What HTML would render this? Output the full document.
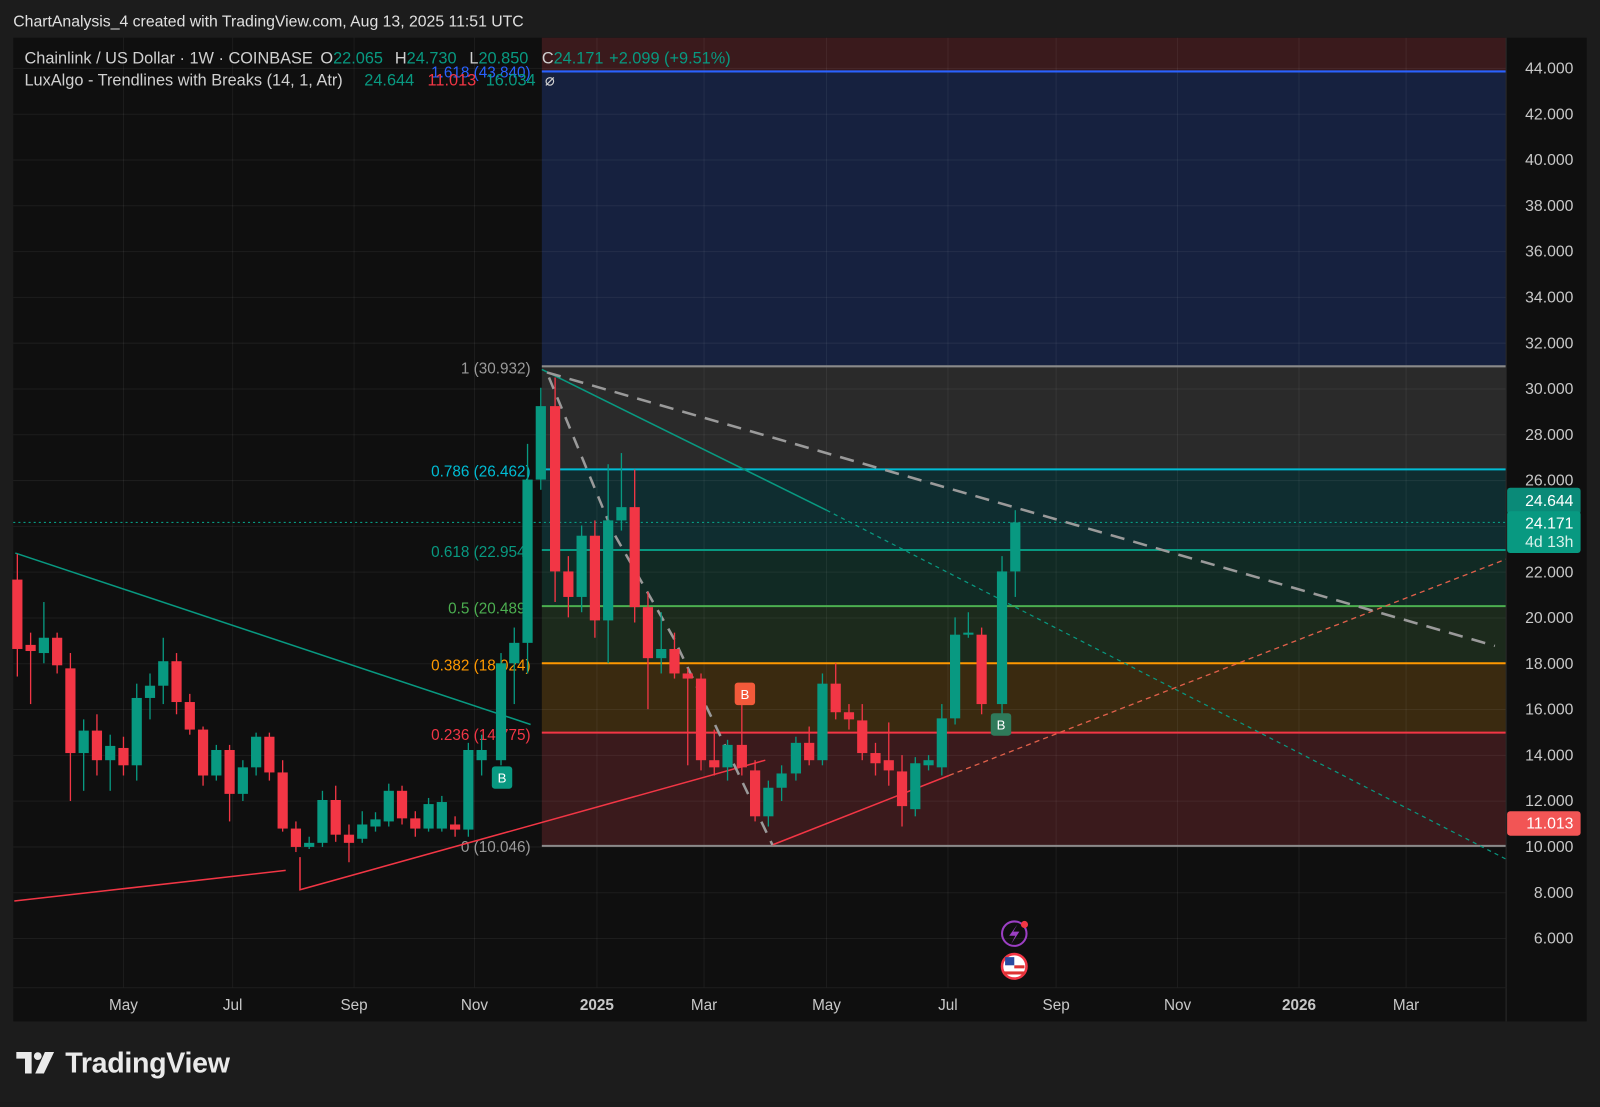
<!DOCTYPE html>
<html><head><meta charset="utf-8"><style>
html,body{margin:0;padding:0;background:#1b1b1b;width:1600px;height:1102px;overflow:hidden}
#w{position:absolute;left:0;top:0;width:1568px;height:1080px;transform:scale(1.0204);transform-origin:0 0;background:#1c1c1c;font-family:"Liberation Sans",sans-serif}
svg text{font-family:"Liberation Sans",sans-serif}
</style></head><body><div id="w">
<svg width="1568" height="1080" xmlns="http://www.w3.org/2000/svg" id="s">
<rect x="0" y="0" width="1568" height="1080" fill="#1c1c1c"/>
<text x="13" y="26" fill="#e0e0e0" font-size="15.5">ChartAnalysis_4 created with TradingView.com, Aug 13, 2025 11:51 UTC</text>
<rect x="13" y="37" width="1542" height="964" fill="#0f0f0f"/>
<rect x="531" y="37" width="945" height="33" fill="#3a1a1c"/>
<rect x="531" y="70" width="945" height="289" fill="#16213f"/>
<rect x="531" y="359" width="945" height="101" fill="#2a2a2a"/>
<rect x="531" y="460" width="945" height="79" fill="#0f2d30"/>
<rect x="531" y="539" width="945" height="55" fill="#112a24"/>
<rect x="531" y="594" width="945" height="56" fill="#1c2a1c"/>
<rect x="531" y="650" width="945" height="68" fill="#3a2a10"/>
<rect x="531" y="718" width="945" height="112" fill="#3a1a1c"/>
<g id="grid" stroke="#ffffff" stroke-opacity="0.06" stroke-width="1"></g>
<g stroke-width="2">
<line x1="531" y1="70" x2="1476" y2="70" stroke="#2962ff"/>
<line x1="531" y1="359" x2="1476" y2="359" stroke="#8a8a8a"/>
<line x1="531" y1="460" x2="1476" y2="460" stroke="#00bcd4"/>
<line x1="531" y1="539" x2="1476" y2="539" stroke="#089981"/>
<line x1="531" y1="594" x2="1476" y2="594" stroke="#4caf50"/>
<line x1="531" y1="650" x2="1476" y2="650" stroke="#ff9800"/>
<line x1="531" y1="718" x2="1476" y2="718" stroke="#f23645"/>
<line x1="531" y1="829" x2="1476" y2="829" stroke="#8a8a8a"/>
</g>
<g font-size="15" text-anchor="end">
<text x="520" y="366" fill="#9a9a9a">1 (30.932)</text>
<text x="520" y="467" fill="#00bcd4">0.786 (26.462)</text>
<text x="520" y="546" fill="#089981">0.618 (22.954)</text>
<text x="520" y="601" fill="#4caf50">0.5 (20.489)</text>
<text x="520" y="657" fill="#ff9800">0.382 (18.024)</text>
<text x="520" y="725" fill="#f23645">0.236 (14.775)</text>
<text x="520" y="835" fill="#9a9a9a">0 (10.046)</text>
<text x="520" y="76" fill="#2962ff">1.618 (43.840)</text>
</g>
<line x1="13" y1="512" x2="1476" y2="512" stroke="#089981" stroke-width="1" stroke-dasharray="2,3"/>
<line x1="15" y1="542" x2="520" y2="710" stroke="#089981" stroke-width="1.5"/>
<polyline points="14,883 280,853" stroke="#f23645" stroke-width="1.5" fill="none"/>
<polyline points="294,840 294,872 750,745" stroke="#f23645" stroke-width="1.5" fill="none"/>
<line x1="757" y1="828" x2="930" y2="760" stroke="#f23645" stroke-width="1.5"/>
<line x1="930" y1="760" x2="1476" y2="548" stroke="#e0604a" stroke-width="1.3" stroke-dasharray="5,4"/>
<line x1="531" y1="362" x2="810" y2="500" stroke="#089981" stroke-width="1.5"/>
<line x1="810" y1="500" x2="1476" y2="842" stroke="#089981" stroke-width="1.2" stroke-dasharray="4,4"/>
<line x1="536" y1="365" x2="1465" y2="633" stroke="#9a9a9a" stroke-width="2.5" stroke-dasharray="14,9"/>
<polyline points="538,370 600,520 660,625 757,828" stroke="#9a9a9a" stroke-width="2.5" fill="none" stroke-dasharray="12,9"/>
<g id="c"></g>
<g font-size="13" text-anchor="middle" fill="#fff">
<rect x="482" y="751" width="20" height="22" rx="3" fill="#089981"/><text x="492" y="767">B</text>
<rect x="720" y="669" width="20" height="22" rx="3" fill="#f25a3a"/><text x="730" y="685">B</text>
<rect x="971" y="699" width="20" height="22" rx="3" fill="#2f7a5a"/><text x="981" y="715">B</text>
</g>
<circle cx="994" cy="915" r="12" fill="none" stroke="#9c3fc4" stroke-width="2"/>
<path d="M997 906 L989 917 L995 917 L991 925 L999 913 L993 913 Z" fill="#9c3fc4"/>
<circle cx="1004" cy="906" r="3.5" fill="#f23645"/>
<circle cx="994" cy="947" r="12" fill="#fff" stroke="#f23645" stroke-width="2.5"/>
<rect x="985" y="938" width="9" height="8" fill="#2a4aa0"/>
<rect x="994" y="946" width="10" height="3" fill="#d33"/><rect x="984" y="952" width="20" height="3" fill="#d33"/>
<line x1="1476" y1="37" x2="1476" y2="1001" stroke="#2a2a2a"/>
<g id="pa" font-size="15.5" fill="#c8c8c8" text-anchor="end"></g>
<rect x="1477" y="478" width="72" height="26" rx="3" fill="#0a8a78"/>
<text x="1542" y="496" fill="#fff" font-size="15.5" text-anchor="end">24.644</text>
<rect x="1477" y="501" width="72" height="41" rx="3" fill="#089981"/>
<text x="1542" y="518" fill="#fff" font-size="15.5" text-anchor="end">24.171</text>
<text x="1542" y="536" fill="#d8f0ea" font-size="15.5" text-anchor="end">4d 13h</text>
<rect x="1477" y="795" width="72" height="24" rx="3" fill="#f25555"/>
<text x="1542" y="812" fill="#fff" font-size="15.5" text-anchor="end">11.013</text>
<line x1="13" y1="968" x2="1476" y2="968" stroke="#1f1f1f"/>
<g font-size="15" fill="#c8c8c8" text-anchor="middle">
<text x="121" y="990">May</text><text x="228" y="990">Jul</text><text x="347" y="990">Sep</text><text x="465" y="990">Nov</text>
<text x="585" y="990" font-weight="bold">2025</text><text x="690" y="990">Mar</text><text x="810" y="990">May</text><text x="929" y="990">Jul</text>
<text x="1035" y="990">Sep</text><text x="1154" y="990">Nov</text><text x="1273" y="990" font-weight="bold">2026</text><text x="1378" y="990">Mar</text>
</g>
<g font-size="16">
<text x="24" y="62" fill="#d0d0d0">Chainlink / US Dollar · 1W · COINBASE</text>
<text x="314" y="62" fill="#d0d0d0">O<tspan fill="#089981">22.065</tspan></text>
<text x="387" y="62" fill="#d0d0d0">H<tspan fill="#089981">24.730</tspan></text>
<text x="460" y="62" fill="#d0d0d0">L<tspan fill="#089981">20.850</tspan></text>
<text x="531" y="62" fill="#d0d0d0">C<tspan fill="#089981">24.171</tspan></text>
<text x="597" y="62" fill="#089981">+2.099 (+9.51%)</text>
<text x="24" y="84" fill="#d0d0d0">LuxAlgo - Trendlines with Breaks (14, 1, Atr)</text>
<text x="357" y="84" fill="#089981">24.644</text>
<text x="419" y="84" fill="#f23645">11.013</text>
<text x="476" y="84" fill="#089981">16.034</text>
<text x="534" y="84" fill="#d0d0d0">⌀</text>
</g>
<g fill="#eaeaea">
<path d="M16 1031 h15 v21 h-6.5 v-14.5 h-8.5 z"/>
<circle cx="37" cy="1035" r="3.8"/>
<path d="M44 1031 h9 l-10 21 h-8.5 z"/>
<text x="64" y="1051" font-size="28" font-weight="bold" letter-spacing="-0.3">TradingView</text>
</g>
</svg>
<script>
var NS="http://www.w3.org/2000/svg",s=document.getElementById('s');
function el(p,t,a){var e=document.createElementNS(NS,t);for(var k in a)e.setAttribute(k,a[k]);p.appendChild(e);return e;}
var g=document.getElementById('grid');
[121,228,347,465,585,690,810,929,1035,1154,1273,1378].forEach(function(x){el(g,'line',{x1:x,y1:37,x2:x,y2:968});});
var pa=document.getElementById('pa');
for(var p=6;p<=44;p+=2){var y=830-(p-10)*22.44;el(g,'line',{x1:13,y1:y,x2:1476,y2:y});var t=el(pa,'text',{x:1542,y:y+5});t.textContent=p.toFixed(3);}
var C=[[17,568,636,543,663],[30,632,638,620,690],[43,640,625,590,650],[56,625,652,620,660],[69,655,738,640,785],[82,738,716,705,775],[95,716,745,700,760],[108,745,731,720,775],[121,733,750,722,760],[134,750,684,670,765],[147,684,672,660,705],[160,672,648,625,690],[173,648,688,640,700],[186,688,715,680,720],[199,715,760,712,770],[212,760,735,730,765],[225,735,778,730,805],[238,778,752,745,785],[251,752,722,718,760],[264,722,757,718,765],[277,757,812,745,815],[290,812,830,805,835],[303,830,826,820,832],[316,826,784,775,830],[329,784,818,770,825],[342,818,826,808,845],[355,822,808,795,826],[368,810,803,796,815],[381,805,775,768,810],[394,775,802,770,808],[407,802,812,795,820],[420,812,788,782,815],[433,812,786,780,815],[446,808,813,800,820],[459,813,735,728,820],[472,745,735,720,760],[491,745,650,640,750],[504,650,630,615,690],[517,630,470,435,660],[530,470,398,380,480],[544,398,560,370,590],[557,560,585,545,605],[570,585,525,515,600],[583,525,608,510,625],[596,608,510,455,650],[609,510,497,444,520],[622,497,595,460,610],[635,595,645,580,695],[648,645,636,600,660],[661,636,660,620,665],[674,660,665,655,750],[687,665,745,660,755],[700,745,752,715,760],[713,752,730,725,765],[727,730,752,690,760],[740,755,800,745,805],[753,800,772,765,810],[766,772,758,750,785],[780,758,728,722,765],[793,728,745,712,750],[806,745,670,660,750],[819,670,698,650,705],[832,698,705,690,715],[845,706,738,690,745],[858,738,748,728,760],[871,745,755,708,770],[884,756,790,740,810],[897,793,748,742,800],[910,750,745,740,755],[923,752,704,690,760],[936,704,622,605,710],[949,622,620,600,625],[962,622,690,615,700],[982,690,560,545,700],[995,560,512,500,585]];
var cg=document.getElementById('c');
C.forEach(function(c){var up=c[2]<c[1],col=up?'#089981':'#f23645';
el(cg,'line',{x1:c[0],y1:c[3],x2:c[0],y2:c[4],stroke:col,'stroke-width':1.3});
var t=Math.min(c[1],c[2]),h=Math.max(2,Math.abs(c[1]-c[2]));el(cg,'rect',{x:c[0]-5,y:t,width:10,height:h,fill:col});});
</script>
</div></body></html>
